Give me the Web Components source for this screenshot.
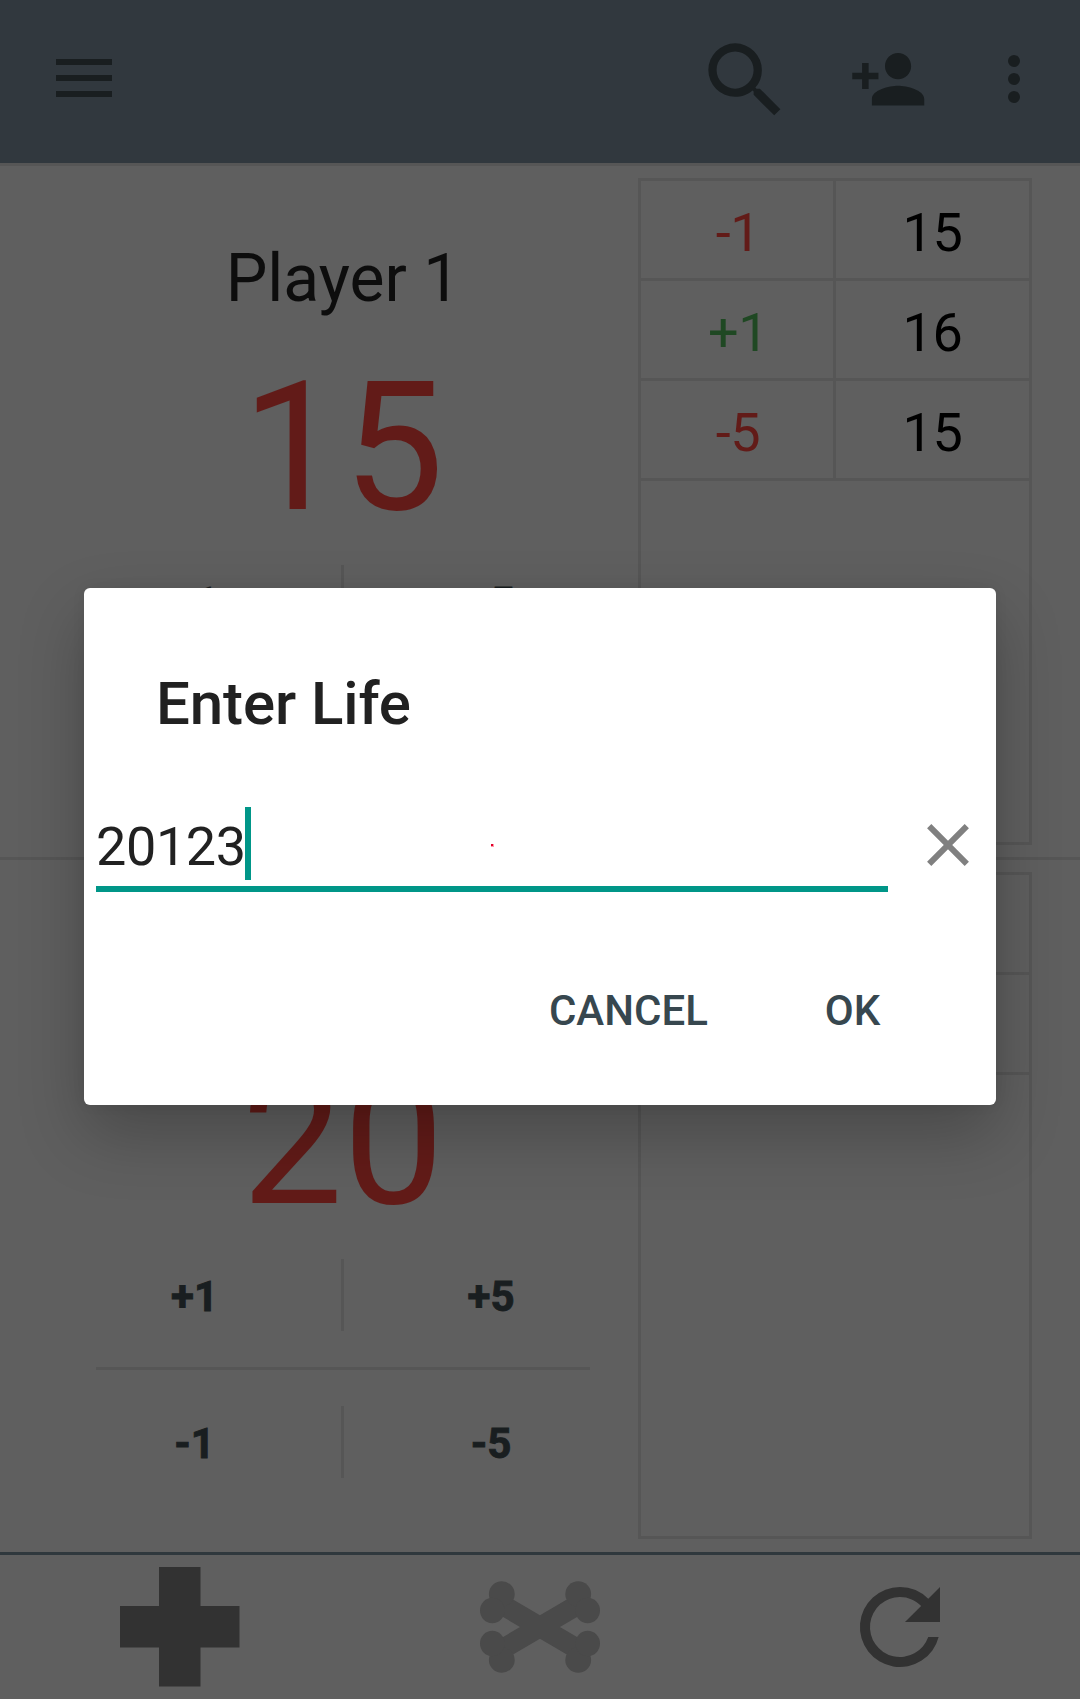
<!DOCTYPE html>
<html lang="en">
<head>
<meta charset="utf-8">
<title>Life Counter</title>
<style>
  html, body { margin: 0; padding: 0; }
  body { width: 1080px; height: 1699px; overflow: hidden; background: #5f5f5f; font-family: Roboto, "Liberation Sans", sans-serif; --line: #565656; --ink: #191e20; --red: #621b18; --green: #1f4823; }
</style>
</head>
<body>
<life-app></life-app>
<script>
const define = (name, html, setup) => {
  const tpl = document.createElement('template');
  tpl.innerHTML = html;
  customElements.define(name, class extends HTMLElement {
    connectedCallback() {
      if (this.shadowRoot) return;
      const root = this.attachShadow({ mode: 'open' });
      root.append(tpl.content.cloneNode(true));
      if (setup) setup(this, root);
    }
  });
};

define('app-toolbar', `
<style>
  :host { display: flex; box-sizing: border-box; height: 166px; background: #31383e; border-bottom: 3px solid var(--line); color: var(--ink); justify-content: space-between; align-items: flex-start; padding-left: 56px; }
  svg { display: block; fill: currentColor; }
  .menu { margin-top: 59px; }
  .actions { display: flex; align-items: flex-start; }
  .search { margin-top: 31px; }
  .add { margin: 39.6px 0 0 54.2px; }
  .more { margin: 55px 60px 0 80.8px; }
</style>
<svg class="menu" width="56" height="38"><path d="M0 0h56v6H0zM0 16h56v6H0zM0 32h56v6H0z"/></svg>
<div class="actions">
  <svg class="search" width="98.8" height="98.8" viewBox="0 0 24 24"><path d="M15.5 14h-.79l-.28-.27A6.471 6.471 0 0 0 16 9.5 6.5 6.5 0 1 0 9.5 16c1.61 0 3.09-.59 4.23-1.57l.27.28v.79l5 4.99L20.49 19l-4.99-5zm-6 0C7.01 14 5 11.99 5 9.5S7.01 5 9.5 5 14 7.01 14 9.5 11.99 14 9.5 14z"/></svg>
  <svg class="add" width="78.5" height="78.5" viewBox="0 0 24 24"><path d="M15 12c2.21 0 4-1.79 4-4s-1.79-4-4-4-4 1.79-4 4 1.79 4 4 4zm-9-2V7H4v3H1v2h3v3h2v-3h3v-2H6zm9 4c-2.67 0-8 1.34-8 4v2h16v-2c0-2.66-5.33-4-8-4z"/></svg>
  <svg class="more" width="12" height="48"><circle cx="6" cy="6" r="6"/><circle cx="6" cy="24" r="6"/><circle cx="6" cy="42" r="6"/></svg>
</div>`);

define('history-row', `
<style>
  :host { display: grid; grid-template-columns: 192px 193px; column-gap: 3px; height: 97px; border-bottom: 3px solid var(--line); background: linear-gradient(var(--line), var(--line)) 192px 0 / 3px 100% no-repeat; font-size: 54px; line-height: 97px; letter-spacing: -.4px; text-align: center; color: #000; }
  div { padding-top: 3px; box-sizing: border-box; height: 97px; }
  .delta { color: var(--red); padding-left: 2px; }
  :host([up]) .delta { color: var(--green); }
</style>
<div class="delta"><slot name="delta"></slot></div><div><slot></slot></div>`);

define('history-table', `
<style>
  :host { display: block; box-sizing: border-box; width: 394px; height: 667px; border: 3px solid var(--line); margin-top: 12px; }
</style><slot></slot>`);

define('step-row', `
<style>
  :host { display: flex; align-items: center; height: 144px; color: var(--ink); font-size: 42px; font-weight: 700; -webkit-text-stroke: .9px currentColor; text-align: center; }
  div { line-height: 140px; padding-top: 4px; }
  .l { width: 293px; } .r { width: 294px; }
  i { width: 3px; height: 72px; background: var(--line); }
</style>
<div class="l"><slot name="one"></slot></div><i></i><div class="r"><slot name="five"></slot></div>`);

define('player-panel', `
<style>
  :host { display: flex; box-sizing: border-box; padding: 0 48px; height: 691px; }
  .main { width: 590px; padding-top: 25px; text-align: center; }
  .name { height: 175px; line-height: 175px; font-size: 66px; color: #0d0d0d; }
  .life { height: 163px; line-height: 163px; font-size: 180px; color: var(--red); }
  hr { border: 0; margin: 0 48px; height: 3px; background: var(--line); }
</style>
<div class="main">
  <div class="name"></div><div class="life"></div>
  <step-row><span slot="one">+1</span><span slot="five">+5</span></step-row>
  <hr>
  <step-row class="minus"><span slot="one">-1</span><span slot="five">-5</span></step-row>
</div>
<history-table><slot></slot></history-table>`, (el, root) => {
  root.querySelector('.name').textContent = el.getAttribute('name') || '';
  root.querySelector('.life').textContent = el.getAttribute('life');
  // The open dialog sits on this panel's minus row, so its labels are dropped.
  if (el.hasAttribute('covered')) root.querySelector('.minus').replaceChildren();
});

define('bottom-bar', `
<style>
  :host { display: grid; grid-template-columns: repeat(3, 360px); place-items: center; height: 144px; border-top: 3px solid #2f383d; fill: #323232; }
  svg { display: block; }
</style>
<svg width="120" height="120"><path d="M39 0h41.5v39H119.5v41.5H80.5V119.500H39V80.500H0V39H39z"/></svg>
<svg width="120" height="92" viewBox="-60 -46 120 92" fill="#4a4a4a"><path d="M-43-25.300 43 25.300M43-25.300-43 25.300" stroke="#4a4a4a" stroke-width="20.200"/>
  <g id="b"><ellipse cx="-38.200" cy="-33" rx="12.900" ry="12.700"/><ellipse cx="-47.700" cy="-16.500" rx="12.300" ry="12.700"/><ellipse cx="38.200" cy="-33" rx="12.900" ry="12.700"/><ellipse cx="47.700" cy="-16.500" rx="12.300" ry="12.700"/></g>
  <use href="#b" transform="scale(1 -1)"/></svg>
<svg width="120" height="120" viewBox="0 0 24 24"><path d="M17.65 6.35A7.958 7.958 0 0 0 12 4a8 8 0 1 0 7.730 10h-2.080A6 6 0 1 1 12 6c1.660 0 3.140.690 4.220 1.780L13 11h7V4l-2.350 2.350z"/></svg>`);

define('life-dialog', `
<style>
  :host { position: absolute; left: 84px; top: 588px; width: 912px; height: 517px; box-sizing: border-box; border-radius: 6px; background: #fff; color: #212121; box-shadow: 0 29px 66px rgba(0,0,0,.24), 0 0 14px rgba(0,0,0,.06); }
  h2 { margin: 0; padding: 75px 0 63px 72px; font-size: 60px; line-height: 81px; font-weight: 500; letter-spacing: -.1px; }
  .row { display: flex; padding-left: 12px; align-items: flex-start; }
  .field { display: flex; box-sizing: border-box; width: 792px; height: 85px; border-bottom: 6px solid #009688; font-size: 54px; line-height: 80px; }
  .value { width: 149px; white-space: nowrap; letter-spacing: -.4px; }
  .caret { width: 6px; height: 73px; background: #009688; }
  .dot { width: 3px; height: 3px; margin: 37px 0 0 240px; background: linear-gradient(#e0002a, #e0002a) 0 0 / 2px 2px no-repeat #ff9aa8; }
  .clear { display: block; margin: 17px 0 0 39px; }
  .actions { display: flex; justify-content: flex-end; gap: 117px; padding: 89px 115.7px 0 0; font-size: 42px; line-height: 60px; font-weight: 500; color: #37474f; }
</style>
<h2>Enter Life</h2>
<div class="row">
  <div class="field"><span class="value">20123</span><span class="caret"></span><span class="dot"></span></div>
  <svg class="clear" width="42" height="42"><path d="M2.200 2.200 39.800 39.800M39.800 2.200 2.200 39.800" stroke="#808080" stroke-width="6"/></svg>
</div>
<div class="actions"><span>CANCEL</span><span>OK</span></div>`);

define('life-app', `
<style>
  :host { display: block; width: 1080px; height: 1699px; }
  .rule { height: 3px; background: var(--line); }
  .second { margin-bottom: 1px; }
</style>
<app-toolbar></app-toolbar>
<player-panel name="Player 1" life="15" covered>
  <history-row><span slot="delta">-1</span>15</history-row>
  <history-row up><span slot="delta">+1</span>16</history-row>
  <history-row><span slot="delta">-5</span>15</history-row>
</player-panel>
<div class="rule"></div>
<player-panel class="second" life="20">
  <history-row></history-row>
  <history-row></history-row>
</player-panel>
<bottom-bar></bottom-bar>
<life-dialog></life-dialog>`);
</script>
</body>
</html>
